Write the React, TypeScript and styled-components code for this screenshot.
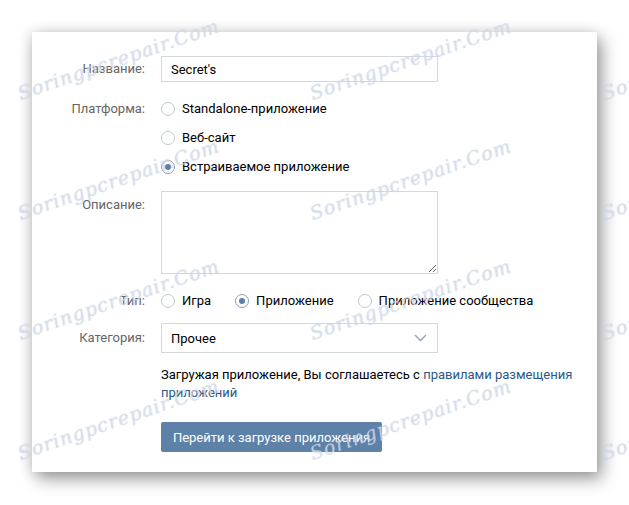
import React from 'react';
import styled, { createGlobalStyle } from 'styled-components';

const GlobalStyle = createGlobalStyle`
  html, body {
    margin: 0;
    padding: 0;
    background: #ffffff;
  }
  body {
    font-family: Roboto, "Open Sans", Arial, sans-serif;
    font-size: 13px;
    color: #000;
  }
`;

const Page = styled.div`
  position: relative;
  width: 629px;
  height: 505px;
  padding: 32px 0 0 32px;
  box-sizing: border-box;
  overflow: hidden;
`;

const Card = styled.div`
  width: 565px;
  height: 440px;
  box-sizing: border-box;
  background: #fff;
  padding: 24px 0 0 0;
  box-shadow: 5px 7px 16px rgba(0, 0, 0, 0.38), -2px 0 12px rgba(0, 0, 0, 0.12);
`;

const Form = styled.div`
  display: grid;
  grid-template-columns: 113px 1fr;
  column-gap: 16px;
`;

const Label = styled.div<{ $top?: number }>`
  text-align: right;
  color: #656565;
  line-height: 16px;
  padding-top: ${p => p.$top ?? 0}px;
`;

const Field = styled.div<{ $mb?: number }>`
  margin-bottom: ${p => p.$mb ?? 0}px;
`;

const TextInput = styled.div`
  width: 277px;
  height: 26px;
  box-sizing: border-box;
  border: 1px solid #d3d9de;
  padding: 0 0 0 9px;
  display: flex;
  align-items: center;
  font-size: 13px;
`;

const RadioList = styled.div`
  display: flex;
  flex-direction: column;
  gap: 9px;
`;

const RadioRow = styled.div`
  display: flex;
  align-items: center;
  gap: 24px;
`;

const RadioItem = styled.div`
  display: flex;
  align-items: center;
  gap: 7px;
  height: 20px;
  line-height: 20px;
  white-space: nowrap;
`;

const RadioCircle = styled.span<{ $on?: boolean }>`
  width: 14px;
  height: 14px;
  box-sizing: border-box;
  border-radius: 50%;
  border: 1px solid ${p => (p.$on ? '#8aa0b8' : '#c0cad5')};
  display: flex;
  align-items: center;
  justify-content: center;
  &::after {
    content: '';
    display: ${p => (p.$on ? 'block' : 'none')};
    width: 6px;
    height: 6px;
    border-radius: 50%;
    background: #5d7fa6;
  }
`;

const Area = styled.textarea`
  display: block;
  width: 277px;
  height: 83px;
  box-sizing: border-box;
  border: 1px solid #d3d9de;
  border-radius: 0;
  outline: none;
  font-family: inherit;
  font-size: 13px;
  resize: both;
  margin: 0;
`;

const Select = styled.div`
  width: 277px;
  height: 30px;
  box-sizing: border-box;
  border: 1px solid #d3d9de;
  padding: 0 10px 0 9px;
  display: flex;
  align-items: center;
  justify-content: space-between;
`;

const Note = styled.div`
  line-height: 18px;
  width: 420px;
  color: #000;
`;

const Link = styled.a`
  color: #2a5885;
  text-decoration: none;
`;

const Button = styled.button`
  height: 30px;
  width: 221px;
  border: none;
  border-radius: 2px;
  background: #5e81a8;
  color: #fff;
  font-family: inherit;
  font-size: 13px;
  padding: 0;
  cursor: pointer;
`;

const Marks = styled.div`
  position: absolute;
  inset: 0;
  pointer-events: none;
`;

const Mark = styled.span`
  position: absolute;
  width: 200px;
  text-align: center;
  font-family: "DejaVu Serif", "Liberation Serif", serif;
  font-style: italic;
  font-weight: normal;
  font-size: 19px;
  letter-spacing: 1px;
  color: rgba(232, 236, 244, 0.55);
  text-shadow: 0 0 1px rgba(170, 186, 212, 0.75);
  transform: rotate(-19deg);
  white-space: nowrap;
`;

const Chevron = () => (
  <svg width="13" height="8" viewBox="0 0 13 8">
    <path d="M1 1l5.5 5.5L12 1" fill="none" stroke="#95a3b5" strokeWidth="1.4" />
  </svg>
);

const Radio = ({ on, children }: { on?: boolean; children: React.ReactNode }) => (
  <RadioItem>
    <RadioCircle $on={on} />
    <span>{children}</span>
  </RadioItem>
);

const markCols = [113, 405, 697];
const markRows = [62, 182, 302, 422];

export default function App() {
  return (
    <>
      <GlobalStyle />
      <Page>
        <Card>
          <Form>
            <Label $top={5}>Название:</Label>
            <Field $mb={17}>
              <TextInput>Secret's</TextInput>
            </Field>

            <Label $top={2}>Платформа:</Label>
            <Field $mb={14}>
              <RadioList>
                <Radio>Standalone-приложение</Radio>
                <Radio>Веб-сайт</Radio>
                <Radio on>Встраиваемое приложение</Radio>
              </RadioList>
            </Field>

            <Label $top={6}>Описание:</Label>
            <Field $mb={17}>
              <Area />
            </Field>

            <Label $top={2}>Тип:</Label>
            <Field $mb={12}>
              <RadioRow>
                <Radio>Игра</Radio>
                <Radio on>Приложение</Radio>
                <Radio>Приложение сообщества</Radio>
              </RadioRow>
            </Field>

            <Label $top={7}>Категория:</Label>
            <Field $mb={13}>
              <Select>
                <span>Прочее</span>
                <Chevron />
              </Select>
            </Field>

            <div />
            <Field $mb={20}>
              <Note>
                Загружая приложение, Вы соглашаетесь с{' '}
                <Link href="#">правилами размещения приложений</Link>
              </Note>
            </Field>

            <div />
            <Field>
              <Button>Перейти к загрузке приложения</Button>
            </Field>
          </Form>
        </Card>
        <Marks>
          {markRows.map(cy =>
            markCols.map(cx => (
              <Mark key={`${cx}-${cy}`} style={{ left: cx - 100, top: cy - 12 }}>
                Soringpcrepair.Com
              </Mark>
            ))
          )}
        </Marks>
      </Page>
    </>
  );
}
